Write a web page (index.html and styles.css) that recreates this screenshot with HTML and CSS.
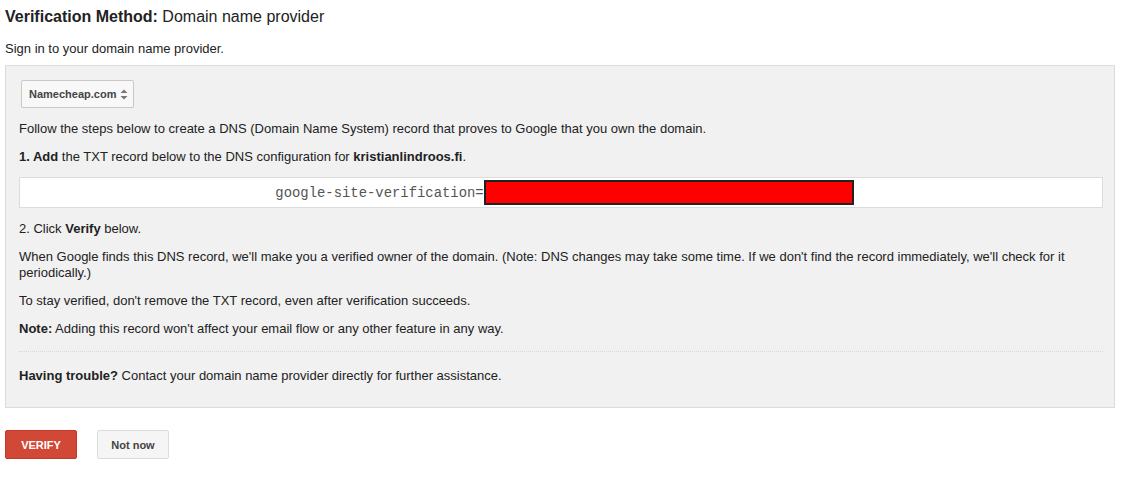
FILE: index.html
```html
<!DOCTYPE html>
<html>
<head>
<meta charset="utf-8">
<link rel="stylesheet" href="styles.css">
</head>
<body>
<div class="page">
  <h2 class="title"><b>Verification Method:</b> Domain name provider</h2>
  <p class="intro">Sign in to your domain name provider.</p>
  <div class="panel">
    <div class="select">
      <span>Namecheap.com</span>
      <svg class="arrows" width="8" height="11" viewBox="0 0 8 11"><path d="M4 0.5 L7.5 4 L0.5 4 Z" fill="#777"/><path d="M4 10.5 L7.5 7 L0.5 7 Z" fill="#777"/></svg>
    </div>
    <p class="txt">Follow the steps below to create a DNS (Domain Name System) record that proves to Google that you own the domain.</p>
    <p class="txt"><b>1. Add</b> the TXT record below to the DNS configuration for <b>kristianlindroos.fi</b>.</p>
    <div class="record"><span class="code">google-site-verification=</span><span class="redact"></span></div>
    <p class="txt">2. Click <b>Verify</b> below.</p>
    <p class="txt">When Google finds this DNS record, we'll make you a verified owner of the domain. (Note: DNS changes may take some time. If we don't find the record immediately, we'll check for it periodically.)</p>
    <p class="txt">To stay verified, don't remove the TXT record, even after verification succeeds.</p>
    <p class="txt"><b>Note:</b> Adding this record won't affect your email flow or any other feature in any way.</p>
    <div class="sep"></div>
    <p class="txt trouble"><b>Having trouble?</b> Contact your domain name provider directly for further assistance.</p>
  </div>
  <div class="actions">
    <button class="btn primary">VERIFY</button>
    <button class="btn secondary">Not now</button>
  </div>
</div>
</body>
</html>
```
FILE: styles.css
```css
html, body {
  margin: 0;
  padding: 0;
  background: #fff;
}
body {
  font-family: "Liberation Sans", Arial, sans-serif;
  color: #222;
  font-size: 13px;
}
.page {
  padding: 7px 5px 0 5px;
  width: 1110px;
}
.title {
  margin: 0;
  font-size: 16px;
  font-weight: normal;
  line-height: 19px;
  color: #222;
}
.title b {
  font-weight: bold;
}
.intro {
  margin: 15px 0 0 0;
  line-height: 16px;
}
.panel {
  margin-top: 8px;
  background: #f1f1f1;
  border: 1px solid #dcdcdc;
  padding: 14px 11px 23px 13px;
}
.select {
  display: inline-flex;
  align-items: center;
  gap: 4px;
  margin-left: 2px;
  height: 26px;
  padding: 0 5px 0 7px;
  border: 1px solid #c8c8c8;
  border-radius: 2px;
  background: #f8f8f8;
  font-size: 11px;
  font-weight: bold;
  color: #444;
}
.arrows {
  display: block;
}
.txt {
  margin: 0;
  line-height: 16px;
}
.select + .txt {
  margin-top: 13px;
}
.txt + .txt {
  margin-top: 12px;
}
.record {
  margin-top: 12px;
  height: 29px;
  background: #fff;
  border: 1px solid #dcdcdc;
  display: flex;
  align-items: center;
  justify-content: center;
  padding-left: 7px;
}
.code {
  font-family: "Liberation Mono", "Courier New", monospace;
  font-size: 13.9px;
  color: #555;
}
.redact {
  display: block;
  width: 366px;
  height: 21px;
  background: #ff0000;
  border: 2px solid #222;
}
.record + .txt {
  margin-top: 13px;
}
.sep {
  margin-top: 14px;
  border-top: 1px dotted #d8d8d8;
}
.trouble {
  margin-top: 16px;
}
.actions {
  margin-top: 22px;
  display: flex;
  gap: 20px;
}
.btn {
  font-family: "Liberation Sans", Arial, sans-serif;
  font-size: 11px;
  font-weight: bold;
  height: 29px;
  border-radius: 2px;
  padding: 0;
  cursor: pointer;
}
.primary {
  width: 72px;
  background: #d14836;
  border: 1px solid #c53727;
  color: #fff;
}
.secondary {
  width: 72px;
  background: #f5f5f5;
  border: 1px solid #dcdcdc;
  color: #444;
}
```
